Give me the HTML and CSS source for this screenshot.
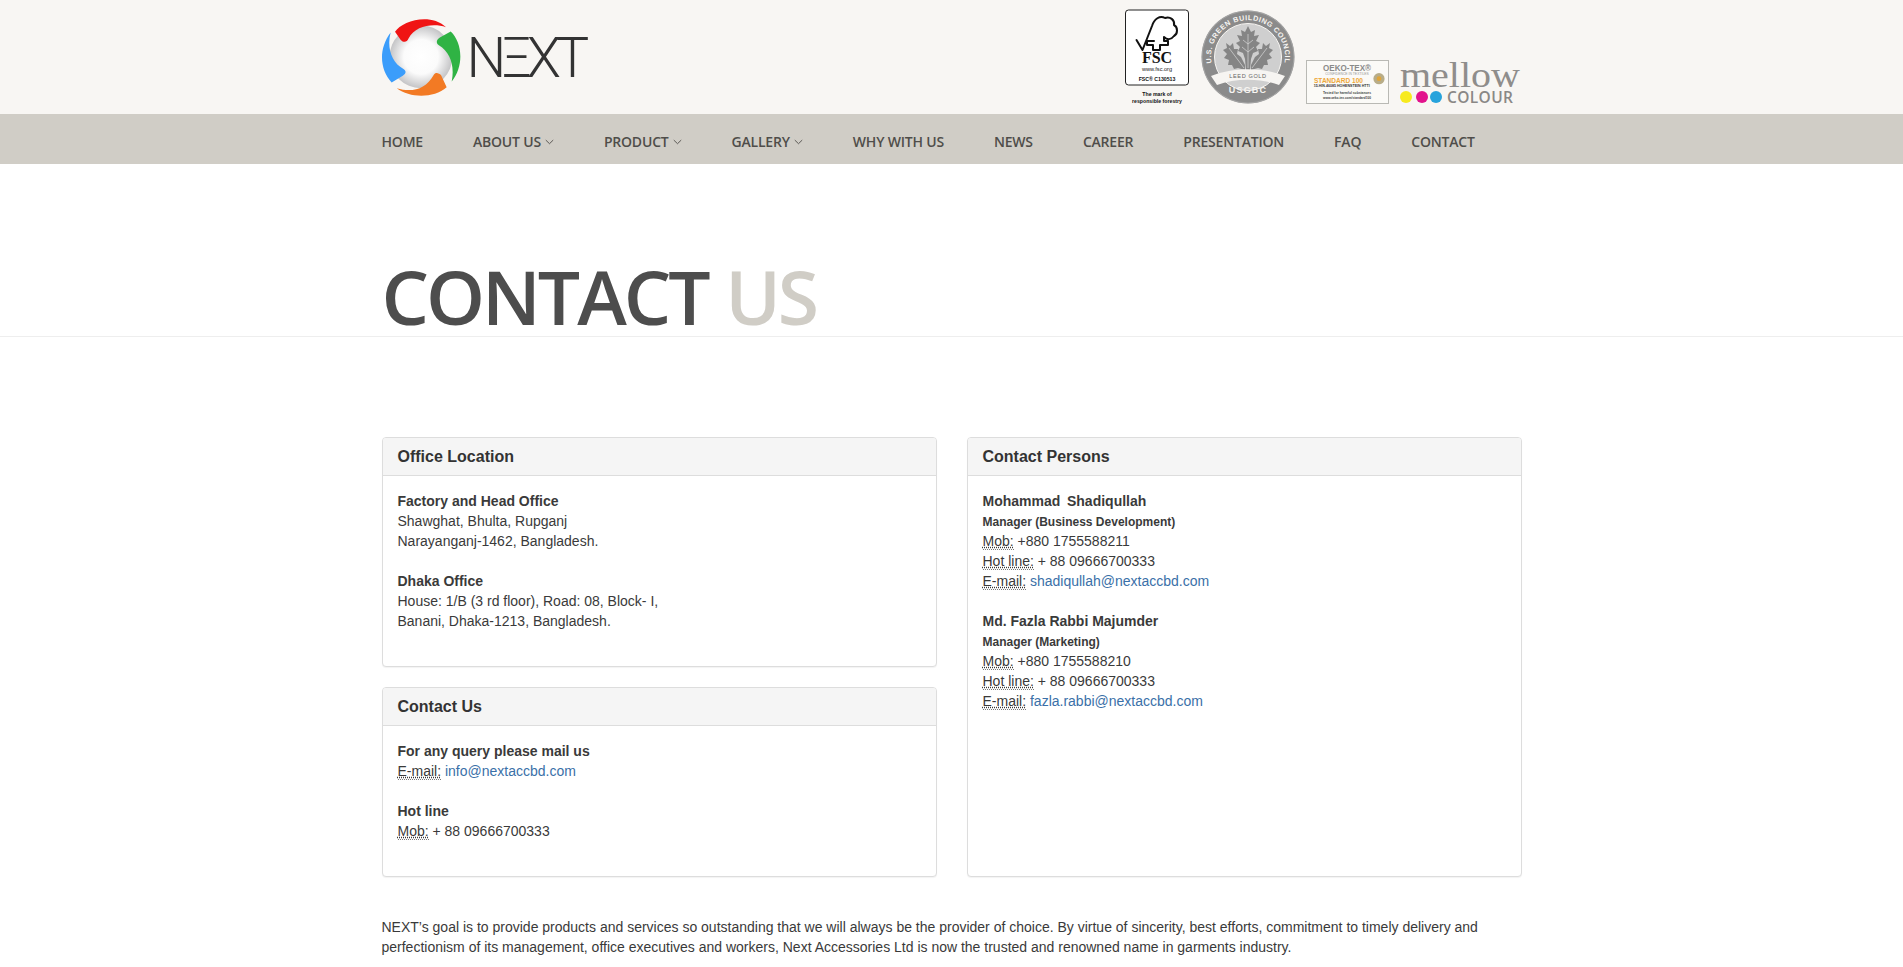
FILE: index.html
```html
<!DOCTYPE html>
<html lang="en">
<head>
<meta charset="utf-8">
<title>Contact Us - NEXT</title>
<link rel="stylesheet" href="styles.css">
</head>
<body>
<header class="topbar">
  <div class="container topbar-inner">
    <a class="brand" href="#">
      <svg class="brand-mark" viewBox="34 54 236 240" aria-hidden="true">
        <defs>
          <radialGradient id="ball" cx="50%" cy="50%" r="50%">
            <stop offset="0" stop-color="#fff"/>
            <stop offset=".55" stop-color="#fbfbfb"/>
            <stop offset="1" stop-color="#c4c4c6"/>
          </radialGradient>
        </defs>
        <circle cx="152" cy="172" r="93" fill="url(#ball)"/>
        <path fill="#f01414" d="M75 98C95 65 180 40 226 84C190 72 135 78 115 118C110 130 100 130 92 122Z"/>
        <path fill="#2fb344" d="M240 97C275 130 280 200 243 245C252 200 240 160 205 138C195 130 198 122 208 115Z"/>
        <path fill="#f27a24" d="M228 262C190 295 120 295 80 265C125 278 165 270 190 225C195 217 205 220 212 227Z"/>
        <path fill="#3b9dfb" d="M65 248C30 210 25 150 62 100C50 145 65 190 100 208C110 215 107 222 98 228Z"/>
      </svg>
      <span class="brand-name">NΞXT</span>
    </a>
    <div class="certs">
      <svg class="cert-fsc" viewBox="0 0 70 98">
        <rect x="3.5" y="3" width="63" height="75" rx="3" fill="#fff" stroke="#222" stroke-width="1"/>
        <path fill="none" stroke="#111" stroke-width="2" stroke-linejoin="round" stroke-linecap="round" d="M14.5 33L20.5 43L30 19C32 12 38 8 43 11C48 9 53 13 52 18C56 20 56 27 52 29C49 33 45 33 42 30L42 34L46 34L46 38L38 38L38 43L31 43L31 38L25 38L25 34L32 34"/>
        <text x="35" y="56" class="fsc-big">FSC</text>
        <text x="35" y="64" class="fsc-url">www.fsc.org</text>
        <text x="35" y="74" class="fsc-code">FSC® C130513</text>
        <text x="35" y="89" class="fsc-note">The mark of</text>
        <text x="35" y="96" class="fsc-note">responsible forestry</text>
      </svg>
      <svg class="cert-leed" viewBox="0 0 94 94">
        <defs>
          <path id="ringTop" d="M20.8 73.2A37 37 0 1 1 73.2 73.2"/>
        </defs>
        <circle cx="47" cy="47" r="46.5" fill="#8b8b8b"/>
        <circle cx="47" cy="47" r="46" fill="none" stroke="#b5b5b5" stroke-width=".6"/>
        <circle cx="47" cy="47" r="33.5" fill="#cfcfcf" stroke="#f7f5f2" stroke-width="1"/>
        <text class="leed-ring"><textPath href="#ringTop" startOffset="50%">U.S. GREEN BUILDING COUNCIL</textPath></text>
        <path fill="#858585" d="M47 16L50 22L54 20L53 26L58 25L55 31L59 33L55 37L57 41L52 43L50 49L49 60L45 60L44 49L42 43L37 41L39 37L35 33L39 31L36 25L41 26L40 20L44 22Z"/>
        <path fill="#858585" d="M25 33L29 36L32 33L33 39L37 39L36 44L40 47L44 55L44 60L37 58L33 59L31 55L27 55L28 50L23 48L26 44L22 40L26 38ZM69 33L65 36L62 33L61 39L57 39L58 44L54 47L50 55L50 60L57 58L61 59L63 55L67 55L66 50L71 48L68 44L72 40L68 38Z"/>
        <path fill="none" stroke="#d9d9d9" stroke-width=".7" d="M47 24L47 58M47 34L42 30M47 34L52 30M47 42L41 37M47 42L53 37M28 38L43 58M66 38L51 58"/>
        <path fill="#f7f5f2" d="M10 66C32 57 62 57 84 66L78 75C60 68 34 68 16 75Z"/>
        <text x="47" y="68" class="leed-gold">LEED GOLD</text>
        <text x="47" y="83" class="leed-usgbc">USGBC</text>
      </svg>
      <svg class="cert-oeko" viewBox="0 0 83 44">
        <rect x=".5" y=".5" width="82" height="43" fill="#fbfaf7" stroke="#b9b9b4"/>
        <text x="41" y="10.5" class="oeko-name" textLength="48" lengthAdjust="spacingAndGlyphs">OEKO-TEX®</text>
        <text x="41" y="14.6" class="oeko-small">CONFIDENCE IN TEXTILES</text>
        <text x="32.5" y="22.7" class="oeko-std" textLength="49" lengthAdjust="spacingAndGlyphs">STANDARD 100</text>
        <circle cx="73" cy="18.7" r="5.6" fill="#b8ad88"/>
        <circle cx="73" cy="18.7" r="2.4" fill="#e0a63a"/>
        <text x="35.7" y="27.4" class="oeko-num" textLength="56" lengthAdjust="spacingAndGlyphs">15.HIN.46085 HOHENSTEIN HTTI</text>
        <text x="41" y="34" class="oeko-tiny" textLength="48" lengthAdjust="spacingAndGlyphs">Tested for harmful substances</text>
        <text x="41" y="38.6" class="oeko-tiny" textLength="48" lengthAdjust="spacingAndGlyphs">www.oeko-tex.com/standard100</text>
      </svg>
      <svg class="cert-mellow" viewBox="0 0 124 44">
        <text x="1" y="27" class="mellow-name" textLength="120" lengthAdjust="spacingAndGlyphs">mellow</text>
        <circle cx="7" cy="37" r="6" fill="#f7ea1e"/>
        <circle cx="23" cy="37" r="6" fill="#e2138c"/>
        <circle cx="37" cy="37" r="6" fill="#27a3dc"/>
        <text x="48" y="43" class="mellow-sub" textLength="66">COLOUR</text>
      </svg>
    </div>
  </div>
</header>

<nav class="mainnav">
  <ul class="container nav-list">
    <li><a href="#">Home</a></li>
    <li><a href="#">About Us<svg class="caret" viewBox="0 0 8 5"><path d="M.7.8L4 4L7.3.8"/></svg></a></li>
    <li><a href="#">Product<svg class="caret" viewBox="0 0 8 5"><path d="M.7.8L4 4L7.3.8"/></svg></a></li>
    <li><a href="#">Gallery<svg class="caret" viewBox="0 0 8 5"><path d="M.7.8L4 4L7.3.8"/></svg></a></li>
    <li><a href="#">Why With Us</a></li>
    <li><a href="#">News</a></li>
    <li><a href="#">Career</a></li>
    <li><a href="#">Presentation</a></li>
    <li><a href="#">FAQ</a></li>
    <li><a href="#">Contact</a></li>
  </ul>
</nav>

<section class="page-title">
  <h1 class="container">CONTACT <span class="title-accent">US</span></h1>
</section>

<main class="container content">
  <div class="columns">
    <div class="column">
      <article class="panel">
        <h3 class="panel-heading">Office Location</h3>
        <div class="panel-body">
          <p><strong>Factory and Head Office</strong><br>Shawghat, Bhulta, Rupganj<br>Narayanganj-1462, Bangladesh.</p>
          <p><strong>Dhaka Office</strong><br>House: 1/B (3 rd floor), Road: 08, Block- I,<br>Banani, Dhaka-1213, Bangladesh.</p>
        </div>
      </article>
      <article class="panel">
        <h3 class="panel-heading">Contact Us</h3>
        <div class="panel-body">
          <p><strong>For any query please mail us</strong><br><abbr title="Email">E-mail:</abbr> <a href="#">info@nextaccbd.com</a></p>
          <p><strong>Hot line</strong><br><abbr title="Mobile">Mob:</abbr> + 88 09666700333</p>
        </div>
      </article>
    </div>
    <article class="panel panel-full">
      <h3 class="panel-heading">Contact Persons</h3>
      <div class="panel-body">
        <p><strong class="person">Mohammad &#8201;Shadiqullah</strong><br><strong class="role">Manager (Business Development)</strong><br><abbr title="Mobile">Mob:</abbr> +880 1755588211<br><abbr title="Hot line">Hot line:</abbr> + 88 09666700333<br><abbr title="Email">E-mail:</abbr> <a href="#">shadiqullah@nextaccbd.com</a></p>
        <p><strong class="person">Md. Fazla Rabbi Majumder</strong><br><strong class="role">Manager (Marketing)</strong><br><abbr title="Mobile">Mob:</abbr> +880 1755588210<br><abbr title="Hot line">Hot line:</abbr> + 88 09666700333<br><abbr title="Email">E-mail:</abbr> <a href="#">fazla.rabbi@nextaccbd.com</a></p>
      </div>
    </article>
  </div>
  <p class="goal">NEXT’s goal is to provide products and services so outstanding that we will always be the provider of choice. By virtue of sincerity, best efforts, commitment to timely delivery and perfectionism of its management, office executives and workers, Next Accessories Ltd is now the trusted and renowned name in garments industry.</p>
</main>
</body>
</html>
```
FILE: styles.css
```css
* { box-sizing: border-box; }
html, body { margin: 0; padding: 0; }
body {
  background: #fff;
  color: #3a3a3a;
  font-family: "Liberation Sans", Arial, sans-serif;
  font-size: 14px;
  line-height: 20px;
}
a { color: #3a70a8; text-decoration: none; }
.container { width: 1170px; margin: 0 auto; padding: 0 15px; }

.topbar { background: #f8f6f3; height: 114px; }
.topbar-inner { display: flex; justify-content: space-between; align-items: flex-start; height: 114px; }
.brand { display: flex; align-items: center; gap: 6px; padding-top: 17px; margin-left: -1px; }
.brand-mark { width: 80px; height: 81px; display: block; }
.brand-name {
  font-family: Roboto, sans-serif;
  font-weight: 300;
  font-size: 56px;
  line-height: 60px;
  letter-spacing: -5.4px;
  color: #333;
}

.certs { display: flex; align-items: flex-start; }
.cert-fsc { width: 70px; height: 98px; margin: 7px 9px 0 0; display: block; }
.cert-leed { width: 94px; height: 94px; margin: 10px 11px 0 0; display: block; }
.cert-oeko { width: 83px; height: 44px; margin: 60px 10px 0 0; display: block; }
.cert-mellow { width: 124px; height: 44px; margin: 60px -1px 0 0; display: block; }

.cert-fsc text, .cert-leed text, .cert-oeko text { text-anchor: middle; font-family: "Liberation Sans", sans-serif; }
.cert-fsc .fsc-big { font-family: "Liberation Serif", serif; font-weight: 700; font-size: 16px; fill: #111; }
.fsc-url { font-size: 5.6px; fill: #222; }
.fsc-code { font-size: 5.2px; font-weight: 700; fill: #111; }
.fsc-note { font-size: 5.2px; font-weight: 700; fill: #111; }
.leed-ring { font-size: 7.2px; font-weight: 700; fill: #f7f5f2; letter-spacing: .55px; }
.leed-gold { font-size: 5.6px; fill: #666; letter-spacing: .6px; }
.leed-usgbc { font-size: 9px; font-weight: 700; fill: #f7f5f2; letter-spacing: 1.2px; }
.oeko-name { font-size: 8.5px; font-weight: 700; fill: #8a8a8a; }
.oeko-small { font-size: 3.4px; fill: #999; }
.oeko-std { font-size: 8px; fill: #eea73a; font-weight: 700; }
.oeko-num { font-size: 4.2px; font-weight: 700; fill: #333; }
.oeko-tiny { font-size: 3.5px; font-weight: 700; fill: #444; }
.mellow-name { font-family: "Liberation Serif", serif; font-size: 35px; fill: #8f8d8b; }
.mellow-sub { font-family: "Open Sans", sans-serif; font-weight: 600; font-size: 15.5px; fill: #8a8886; }

.mainnav { background: #d0cdc6; height: 50px; }
.nav-list {
  list-style: none;
  display: flex;
  gap: 50px;
  margin: 0 auto;
  height: 50px;
  padding-top: 5px;
  align-items: center;
}
.nav-list a {
  display: flex;
  align-items: center;
  font-family: "Open Sans", sans-serif;
  font-weight: 600;
  font-size: 14px;
  text-transform: uppercase;
  letter-spacing: -.2px;
  color: #4f4d4a;
}
.caret { width: 9px; height: 6px; margin: 1px 0 0 4px; fill: none; stroke: #4f4d4a; stroke-width: .8; }

.page-title { border-bottom: 1px solid #eee; padding-top: 94px; height: 173px; }
.page-title h1 {
  margin-top: 0;
  margin-bottom: 0;
  font-family: "Open Sans", sans-serif;
  font-weight: 600;
  font-size: 75px;
  line-height: 76px;
  letter-spacing: -3px;
  word-spacing: 1px;
  color: #4d4d4d;
}
.title-accent { color: #d0cdc6; }

.content { padding-top: 100px; }
.columns { display: grid; grid-template-columns: 555px 555px; gap: 30px; }
.column { display: flex; flex-direction: column; }
.panel {
  background: #fff;
  border: 1px solid #ddd;
  border-radius: 4px;
  box-shadow: 0 1px 1px rgba(0, 0, 0, .05);
  margin-bottom: 20px;
}
.panel-heading {
  margin: 0;
  padding: 10px 15px;
  height: 38px;
  background: #f5f5f5;
  border-bottom: 1px solid #ddd;
  border-radius: 3px 3px 0 0;
  font-size: 16px;
  line-height: 18px;
  font-weight: 700;
  color: #333;
}
.panel-body { padding: 15px; }
.panel-body p { margin: 0 0 20px; }
.role { font-size: 12px; line-height: 12px; }
abbr { border-bottom: 1px dotted #777; text-decoration: underline dotted; }
.goal { margin: 20px 0 0; }
```
